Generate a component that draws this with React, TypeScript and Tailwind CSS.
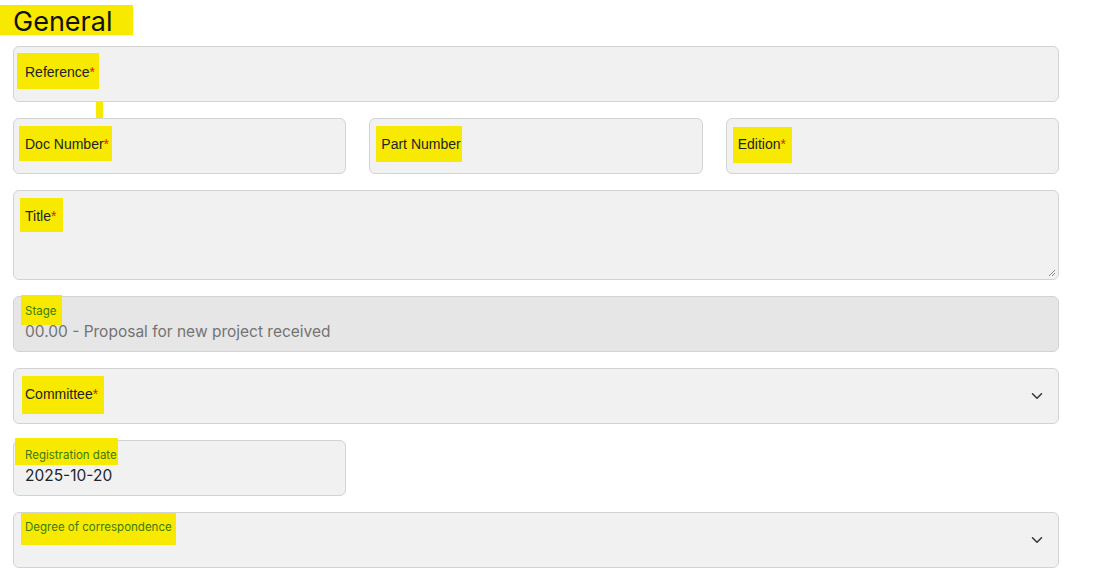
import type { ReactNode } from "react";

const labelFont = { fontFamily: '"Liberation Sans", Arial, sans-serif' };
const interFont = { fontFamily: 'Inter, "Noto Sans", sans-serif' };

function Mark({ children, inset }: { children: ReactNode; inset: string }) {
  return (
    <span className="relative inline-block">
      <span className={`absolute bg-[#f7ea00] ${inset}`} />
      <span className="relative">{children}</span>
    </span>
  );
}

function Req() {
  return <span className="text-[#e3170a]">*</span>;
}

function Chevron() {
  return (
    <svg width="12" height="8" viewBox="0 0 12 8" className="absolute right-[15px] top-1/2 -translate-y-1/2" aria-hidden="true">
      <path d="M1.5 1.8L6 6.2l4.5-4.4" fill="none" stroke="#343a40" strokeWidth="1.6" strokeLinecap="round" strokeLinejoin="round" />
    </svg>
  );
}

function Field({ label, inset, required, className = "", children }: { label: string; inset: string; required?: boolean; className?: string; children?: ReactNode }) {
  return (
    <div className={`relative h-[56px] rounded-[6px] border border-[#d3d3d3] bg-[#f1f1f1] pl-[11px] pt-[15px] text-[14px] text-[#212529] ${className}`} style={labelFont}>
      <Mark inset={inset}>
        {label}
        {required ? <Req /> : null}
      </Mark>
      {children}
    </div>
  );
}

function SmallField({ label, value, inset, className = "", muted, select }: { label: string; value?: string; inset: string; className?: string; muted?: boolean; select?: boolean }) {
  return (
    <div className={`relative h-[56px] rounded-[6px] border border-[#d3d3d3] pl-[11px] pt-[7px] ${muted ? "bg-[#e6e6e6]" : "bg-[#f1f1f1]"} ${className}`} style={interFont}>
      <div className="text-[11.5px] leading-[15px] text-[#3b7a12]">
        <Mark inset={inset}>{label}</Mark>
      </div>
      {value ? <div className={`mt-[2px] text-[15.5px] leading-[22px] ${muted ? "text-[#737373]" : "text-[#212529]"}`}>{value}</div> : null}
      {select ? <Chevron /> : null}
    </div>
  );
}

export default function App() {
  return (
    <div className="min-h-screen bg-white">
      <div className="relative h-[46px]">
        <div className="absolute left-0 top-[5px] h-[30px] w-[133px] bg-[#f7ea00]" />
        <h1 className="relative pl-[13px] pt-[5px] text-[27px] leading-[34px] text-[#111]" style={interFont}>
          General
        </h1>
      </div>

      <div className="relative flex w-[1059px] flex-col gap-4 pl-[13px]">
        <div className="absolute left-[96px] top-[46px] h-[26px] w-[7px] bg-[#f7ea00]" />

        <Field label="Reference" required inset="-left-[8px] -right-[4px] -top-[9px] -bottom-[6px]" />

        <div className="grid grid-cols-3 gap-[23px]">
          <Field label="Doc Number" required inset="-left-[6px] -right-[3px] -top-[8px] -bottom-[6px]" />
          <Field label="Part Number" inset="-left-[5px] -right-[1px] -top-[8px] -bottom-[7px]" />
          <Field label="Edition" required inset="-left-[5px] -right-[6px] -top-[7px] -bottom-[8px]" />
        </div>

        <Field label="Title" required className="!h-[90px]" inset="-left-[5px] -right-[7px] -top-[8px] -bottom-[5px]">
          <svg width="10" height="10" viewBox="0 0 10 10" className="absolute bottom-[2px] right-[2px]" aria-hidden="true">
            <path d="M9 3L3 9M9 6L6 9" stroke="#8a8a8a" strokeWidth="1" />
          </svg>
        </Field>

        <SmallField label="Stage" value="00.00 - Proposal for new project received" muted inset="-left-[4px] -right-[6px] -top-[9px] -bottom-[6px]" />

        <Field label="Committee" required inset="-left-[3px] -right-[6px] -top-[8px] -bottom-[9px]">
          <Chevron />
        </Field>

        <SmallField label="Registration date" value="2025-10-20" className="w-[333px]" inset="-left-[10px] -right-[1px] -top-[10px] -bottom-[2px]" />

        <SmallField label="Degree of correspondence" select inset="-left-[4px] -right-[4px] -top-[7px] -bottom-[10px]" />
      </div>
    </div>
  );
}
